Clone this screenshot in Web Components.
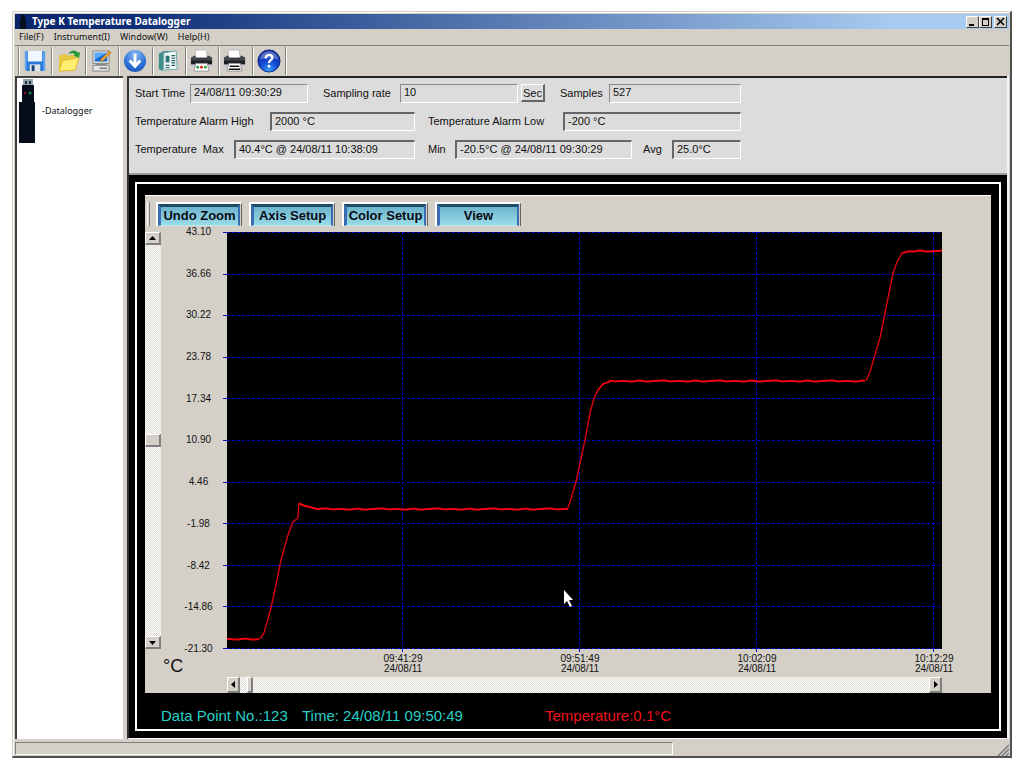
<!DOCTYPE html>
<html lang="en">
<head>
<meta charset="utf-8">
<title>Type K Temperature Datalogger</title>
<style>
html,body{margin:0;background:#fff}
body{font-family:"Liberation Sans",Arial,sans-serif;color:#111;min-height:100vh;display:flex}
</style>
</head>
<body>
<logger-window></logger-window>
<script>
const define=(name,html,setup)=>{
  const t=document.createElement('template');t.innerHTML=html;
  customElements.define(name,class extends HTMLElement{
    constructor(){super();this.attachShadow({mode:'open'}).append(t.content.cloneNode(true));}
    connectedCallback(){if(setup)setup(this,this.shadowRoot);}
  });
};

define('title-bar',`<style>
:host{display:flex;align-items:center;height:15px;background:linear-gradient(90deg,#0a246a,#0f2f78 12%,#a6caf0 88%);color:#fff;padding:0 2px 0 5px}
.dev{width:6px;height:14px;margin-right:6px}
h1{font:bold 10px/15px "Noto Sans","DejaVu Sans",sans-serif;margin:0;flex:1;white-space:nowrap}
button{width:13px;height:12px;padding:0;border:1px solid;border-color:#fff #404040 #404040 #fff;background:#d4d0c8;display:grid;place-items:center}
button:last-child{margin-left:2px}
</style>
<svg class="dev" viewBox="0 0 6 14"><path d="M1 0h4v4h1v10H0V4h1z" fill="#06101f"/></svg>
<h1>Type K Temperature Datalogger</h1>
<button aria-label="Minimize"><svg width="9" height="9"><path d="M1 7h5v2H1z"/></svg></button>
<button aria-label="Maximize"><svg width="9" height="9"><path d="M1 1h7v8H1zM2 3v5h5V3z" fill-rule="evenodd"/></svg></button>
<button aria-label="Close"><svg width="9" height="9"><path d="M1 1l7 7M8 1l-7 7" stroke="#000" stroke-width="1.6"/></svg></button>`);

define('menu-bar',`<style>
:host{display:flex;height:16px;align-items:center;gap:10px;padding:0 4px;border-bottom:1px solid #808080;font:9px/16px "Noto Sans","DejaVu Sans",sans-serif}
button{font:inherit;color:inherit;border:0;padding:0;background:none}
</style><button>File(F)</button><button>Instrument(I)</button><button>Window(W)</button><button>Help(H)</button>`);

const printer=extra=>`<path d="M6 1h11l1 9H5z" fill="#fff" stroke="#bbb"/><path d="M1 9h22v9H1z" fill="#1c1e22"/><path d="M1 9l3-2h2v3h12V7h2l3 2v3H1z" fill="#44484d"/><path d="M1 16h22v3H1z" fill="#c9cdd0"/><path d="M6 15h12l2 8H4z" fill="#fff" stroke="#999"/>${extra}`;
const icons={
Save:`<path d="M2 2h21v21H4l-2-2z" fill="#2878d8"/><path d="M2 2h2v19H2zM21 2h2v21h-2z" fill="#5aa4f0"/><path d="M5 2h15v11H5z" fill="#eef6ff"/><path d="M7 16h11v7H7z" fill="#dfe4ea"/><path d="M9 17h3v6H9z" fill="#173f78"/>`,
Open:`<path d="M2 7l7-2 2 2 8-1v4l-2 12-15 1z" fill="#e8c840"/><path d="M2 23l4-11 17-3-4 13z" fill="#ffee70" stroke="#e0b828"/><path d="M12 5c3-5 8-4 10-1l2-1-1 6-6-2 2-1c-2-2-4-2-7-1z" fill="#269a30"/>`,
Configure:`<path d="M3 2h17v13H3z" fill="#dfe2e2" stroke="#888"/><path d="M5 4h13v9H5z" fill="#1668d8"/><path d="M5 4h13L5 11z" fill="#54a8ff"/><path d="M6 15h11v2H6z" fill="#888"/><path d="M3 17h17v6H3z" fill="#e2e4e2" stroke="#888"/><path d="M10 20h8" stroke="#444"/><path d="M11 11l9-9 2 2-8 8-3 1z" fill="#e9a33a" stroke="#9a641c" stroke-width=".6"/>`,
Download:`<defs><radialGradient id="g" cx=".5" cy=".2" r=".9"><stop offset="0" stop-color="#8bbcf5"/><stop offset=".6" stop-color="#2a6fd8"/><stop offset="1" stop-color="#1b4fae"/></radialGradient></defs><circle cx="12.500" cy="12.500" r="11.500" fill="url(#g)"/><path d="M12.500 5v12M7 12l5.500 6 5.500-6" stroke="#fff" stroke-width="3" fill="none"/>`,
Report:`<path d="M2 5l5-3h13l-1 3-12 1-1 17-4-2z" fill="#3f8f8c"/><path d="M7 4l13-2 1 19-14 1z" fill="#f4fafa" stroke="#6aa4a4"/><path d="M9 7h4v7H9z" fill="#2c7478"/><path d="M15 7h4M15 9.500h4M15 12h4M15 14.500h4M9 17h4M9 19.500h4M15 17h4" stroke="#2c6668" stroke-width="1.300"/>`,
'Print graph':printer(`<circle cx="8" cy="19" r="1.500" fill="#28a040"/><circle cx="12" cy="19" r="1.500" fill="#e02020"/><circle cx="16" cy="19" r="1.500" fill="#28a040"/>`),
'Print data':printer(`<path d="M7 18h10M6 21h12" stroke="#111" stroke-width="1.500"/>`),
Help:`<defs><radialGradient id="g" cx=".5" cy=".95" r="1"><stop offset="0" stop-color="#35a0ff"/><stop offset=".45" stop-color="#1648d0"/><stop offset="1" stop-color="#0a1e90"/></radialGradient></defs><circle cx="12.500" cy="12.500" r="11.500" fill="url(#g)" stroke="#0c247c"/><path d="M3 11a9.500 9 0 0 1 19 0q-9-3-19 0z" fill="#fff" opacity=".3"/><path d="M9 10c0-5 7-5 7-1 0 3-3.500 2-3.500 5.500" stroke="#fff" stroke-width="2.400" fill="none"/><circle cx="12.500" cy="18" r="1.500" fill="#fff"/>`};
define('tool-button',`<style>
:host{display:block;flex:1;border-right:1px solid #808080;box-shadow:1px 0 #fff}
button{width:100%;height:100%;border:0;padding:0;background:none;display:grid;place-items:center}
svg{width:24px;height:24px}</style><button><svg viewBox="0 0 25 25"></svg></button>`,(el,r)=>{
  r.querySelector('button').setAttribute('aria-label',el.getAttribute('name'));
  r.querySelector('svg').innerHTML=icons[el.getAttribute('name')];});
define('tool-bar',`<style>:host{display:flex;width:267px;height:28px;margin:1px 0 1px 3px;border-left:1px solid #808080;box-shadow:inset 1px 0 #fff}</style>`+
  Object.keys(icons).map(n=>`<tool-button name="${n}"></tool-button>`).join(''));

define('device-tree',`<style>
:host{display:flex;align-items:flex-start;gap:6px;width:104px;flex:none;background:#fff;border:solid #404040;border-width:2px 0 0 2px;padding:1px;font:9px/12px "Noto Sans","DejaVu Sans",sans-serif}
svg{width:17px;height:64px;margin-left:1px}span{margin-top:26px}</style>
<svg viewBox="0 0 17 64"><path d="M4 0h10v7H4z" fill="#8fa3ae"/><path d="M6 2h2v3H6zM10 2h2v3h-2z" fill="#233"/><path d="M3 6h12v17h1v41H0V23h3z" fill="#060c1a"/><circle cx="6" cy="14" r="1" fill="#c01818"/><circle cx="11" cy="14" r="1.500" fill="#188050"/></svg>
<span>-Datalogger</span>`);

define('data-field',`<style>
:host{display:block}label{display:flex;align-items:center;height:20px;font-size:11px;line-height:20px;white-space:nowrap}
span{width:var(--l)}
input{box-sizing:border-box;width:var(--w);height:19px;margin:0;padding:0 0 2px 3px;font:inherit;color:#111;background:#dcdcdc;border:solid;border-width:1px;border-color:#888 #fff #fff #888;border-radius:0;outline:0}
:host([deep]) input{border-width:2px 1px 1px 2px;border-color:#666 #fff #fff #666;padding:0 0 1px 3px}
</style><label><span></span><input readonly></label>`,(el,r)=>{
  r.querySelector('span').textContent=el.getAttribute('label');r.querySelector('input').value=el.getAttribute('value');});

define('info-panel',`<style>
:host{display:flex;flex-direction:column;gap:8px;background:#dcdcdc;border-top:2px solid #222;border-bottom:2px solid #999;padding:5px 6px 14px}
.row{display:flex;height:20px}
button{box-sizing:border-box;width:24px;height:18px;margin:1px 15px 0 3px;padding:0;font:11px "Liberation Sans",Arial,sans-serif;color:#111;background:#dcdcdc;border:solid;border-width:1px 2px 2px 1px;border-color:#fff #666 #666 #fff}
.a{margin-right:15px}.b{margin-right:13px}.c{margin-right:11px}
</style>
<div class="row"><data-field class="a" label="Start Time" value="24/08/11 09:30:29" style="--l:55px;--w:118px"></data-field><data-field label="Sampling rate" value="10" style="--l:77px;--w:118px"></data-field><button>Sec</button><data-field label="Samples" value="527" style="--l:49px;--w:132px"></data-field></div>
<div class="row"><data-field deep class="b" label="Temperature Alarm High" value="2000 °C" style="--l:135px;--w:145px"></data-field><data-field deep label="Temperature Alarm Low" value="-200 °C" style="--l:135px;--w:178px"></data-field></div>
<div class="row"><data-field deep class="b" label="Temperature&nbsp; Max" value="40.4°C @ 24/08/11 10:38:09" style="--l:99px;--w:181px"></data-field><data-field deep class="c" label="Min" value="-20.5°C @ 24/08/11 09:30:29" style="--l:27px;--w:177px"></data-field><data-field deep label="Avg" value="25.0°C" style="--l:29px;--w:69px"></data-field></div>`);

define('scroll-track',`<style>
:host{display:flex;flex-direction:column;background:repeating-conic-gradient(#fff 0 25%,#dedbd5 0 50%) 0 0/2px 2px}
:host([across]){flex-direction:row}
button,i{box-sizing:border-box;flex:none;display:grid;place-items:center;width:16px;height:13px;padding:0;background:#d4d0c8;border:solid;border-width:1px 2px 2px 1px;border-color:#fff #808080 #808080 #fff}
:host([across]) button,:host([across]) i{width:13px;height:16px}
:host([across]) i{width:6px}
.pre{flex:var(--pre)}.post{flex:var(--post)}
</style><button aria-label="Back"><svg width="7" height="7"><path/></svg></button><span class="pre"></span><i></i><span class="post"></span><button aria-label="Forward"><svg width="7" height="7"><path/></svg></button>`,(el,r)=>{
  const p=r.querySelectorAll('path'),a=el.hasAttribute('across');
  p[0].setAttribute('d',a?'M5 0v7L1 3.500z':'M0 5h7L3.500 1z');p[1].setAttribute('d',a?'M2 0v7l4-3.500z':'M0 2h7L3.500 6z');});

define('trace-plot',`<style>
:host{display:block;position:relative;background:#000}
.plot{display:block;position:absolute;width:100%;height:100%;overflow:visible}
.plot *{vector-effect:non-scaling-stroke;fill:none}
.plot path{shape-rendering:crispEdges}
.cursor{position:absolute;left:336px;top:358px}
</style><svg class="plot" viewBox="0 0 715 417" preserveAspectRatio="none"></svg>
<svg class="cursor" width="11" height="18" viewBox="0 0 11 18"><path d="M1 0v14l3-3 3 6 2-1-3-6h4z" fill="#fff"/></svg>`,(el,r)=>{
  let s='';
  for(let i=0;i<=10;i++){const y=Math.round(i*41.6)+.5;
    s+=`<path d="M0 ${y}H715" stroke="#0000c8" stroke-dasharray="3 2"/><path d="M-4 ${y}H0" stroke="#1010b0"/>`;}
  for(const x of[176,353,530,707])s+=`<path d="M${x-.5} 0V417" stroke="#0000c8" stroke-dasharray="3 2"/><path d="M${x-.5} 417v3" stroke="#1010b0"/>`;
  const flat=(a,b,y)=>{let d='';for(let x=a;x<=b;x+=4)d+=` ${x},${y+[0,.4,-.3,.5,0,-.5,.2][(x*7+(x>>3))%7]}`;
    return `<polyline points="${d}" stroke="#f00010" stroke-width="2"/>`;};
  const rise=d=>`<polyline points="${d}" stroke="#d80010" stroke-width="1.4"/>`;
  s+=flat(0,33,407)+rise('33,407 37,401 44,376 50,348 54,328 61,303 66,290 71,286 72,271')+
    `<polyline points="72,271.500 78,274 83,275 89,277" stroke="#f00010" stroke-width="2"/>`+flat(88,340,277)+
    rise('340,278 343,270 349,250 353,231 358,208 363,181 367,166 371,158 376,152 383,149.500')+
    `<polyline points="371,158 376,152 383,149.500" stroke="#f00010" stroke-width="1.5"/>`+flat(382,639,149)+
    rise('639,149 643,140 647,126 653,106 658,81 663,56 666,41 670,30 675,21')+
    `<polyline points="675,21 683,19" stroke="#f00010" stroke-width="2"/>`+flat(683,715,19);
  r.querySelector('.plot').innerHTML=s;});

define('chart-button',`<style>
:host{display:block;width:82px;border:solid;border-width:2px 1px 0 2px;border-color:#fff #666 #fff #fff;padding-right:1px}
button{box-sizing:border-box;width:100%;height:22px;padding:0;white-space:nowrap;font:bold 13px/18px "Liberation Sans",Arial,sans-serif;color:#0a0a14;background:linear-gradient(#6db4cc,#9adbe8);border:solid;border-width:3px 2px 1px 3px;border-color:#1c4c66 #3a6cb0 #b8e8f0 #3a6cb0;display:grid;place-items:center}
</style><button><slot></slot></button>`);

define('chart-panel',`<style>
:host{flex:1;display:grid;grid-template-columns:16px 66px minmax(0,1fr) 49px;grid-template-rows:36px minmax(300px,1fr) 28px 16px;background:#d4d0c8;border-top:1px solid #fff}
.bar{grid-column:1/-1;display:flex;align-items:flex-start;gap:7px;padding:6px 0 0 2px}
.grip{width:1px;height:24px;margin-right:-1px;border-left:1px solid #fff;border-right:1px solid #808080}
.y{display:flex;flex-direction:column;justify-content:space-between;margin:-6px 5px -6px 14px;font-size:10px;line-height:12px;text-align:center}
.unit{grid-column:1/3;padding-left:18px;font-size:18px;line-height:34px}
.x{grid-column:3/5;display:flex;justify-content:space-between;padding:5px 35px 0 154px;font-size:10px;line-height:10px;text-align:center}
.x span{width:44px}
scroll-track[across]{grid-column:3}
</style>
<div class="bar"><span class="grip"></span><chart-button>Undo Zoom</chart-button><chart-button>Axis Setup</chart-button><chart-button>Color Setup</chart-button><chart-button>View</chart-button></div>
<scroll-track style="--pre:190;--post:190"></scroll-track>
<div class="y">${['43.10','36.66','30.22','23.78','17.34','10.90','4.46','-1.98','-8.42','-14.86','-21.30'].map(v=>`<span>${v}</span>`).join('')}</div>
<trace-plot></trace-plot><span></span>
<div class="unit">°C</div>
<div class="x">${['09:41:29','09:51:49','10:02:09','10:12:29'].map(v=>`<span>${v}<br>24/08/11</span>`).join('')}</div>
<span></span><span></span><scroll-track across style="--pre:7;--post:676"></scroll-track>`);

define('reading-line',`<style>
:host{display:grid;grid-template-columns:141px 243px 1fr;height:36px;padding:4px 0 0 16px;box-sizing:border-box;font-size:15px;line-height:37px;color:#28d0c8;white-space:nowrap}
.t{color:#f0101c}</style><span>Data Point No.:123</span><span>Time: 24/08/11 09:50:49</span><span class="t">Temperature:0.1°C</span>`);

define('status-bar',`<style>
:host{display:flex;height:15px;margin-top:2px;justify-content:space-between;align-items:flex-end}
i{width:66%;height:11px;border:1px solid;border-color:#808080 #fff #fff #808080;align-self:center}
</style><i></i><svg width="12" height="12"><path d="M1 12L12 1M5 12l7-7M9 12l3-3" stroke="#777" stroke-width="1.500"/></svg>`);

define('logger-window',`<style>
:host{flex:1;display:flex;flex-direction:column;margin:11px 12px 10px;background:#d4d0c8;border:solid;border-width:1px 2px 2px 1px;border-color:#d4d0c8 #505050 #505050 #d4d0c8;padding:2px 1px 0 2px;box-shadow:inset 1px 1px #fff}
.body{flex:1;display:flex;gap:4px}
main{flex:1;display:flex;flex-direction:column;background:#000;border:solid;border-width:0 2px 1px 2px;border-color:#fff #f4f4f4 #fff #333;min-width:0}
.frame{flex:1;display:flex;flex-direction:column;margin:7px 6px 7px;border:2px solid #fff;padding:11px 8px 0}
</style>
<title-bar></title-bar><menu-bar></menu-bar><tool-bar></tool-bar>
<div class="body"><device-tree></device-tree><main><info-panel></info-panel><div class="frame"><chart-panel></chart-panel><reading-line></reading-line></div></main></div>
<status-bar></status-bar>`);
</script>
</body>
</html>
